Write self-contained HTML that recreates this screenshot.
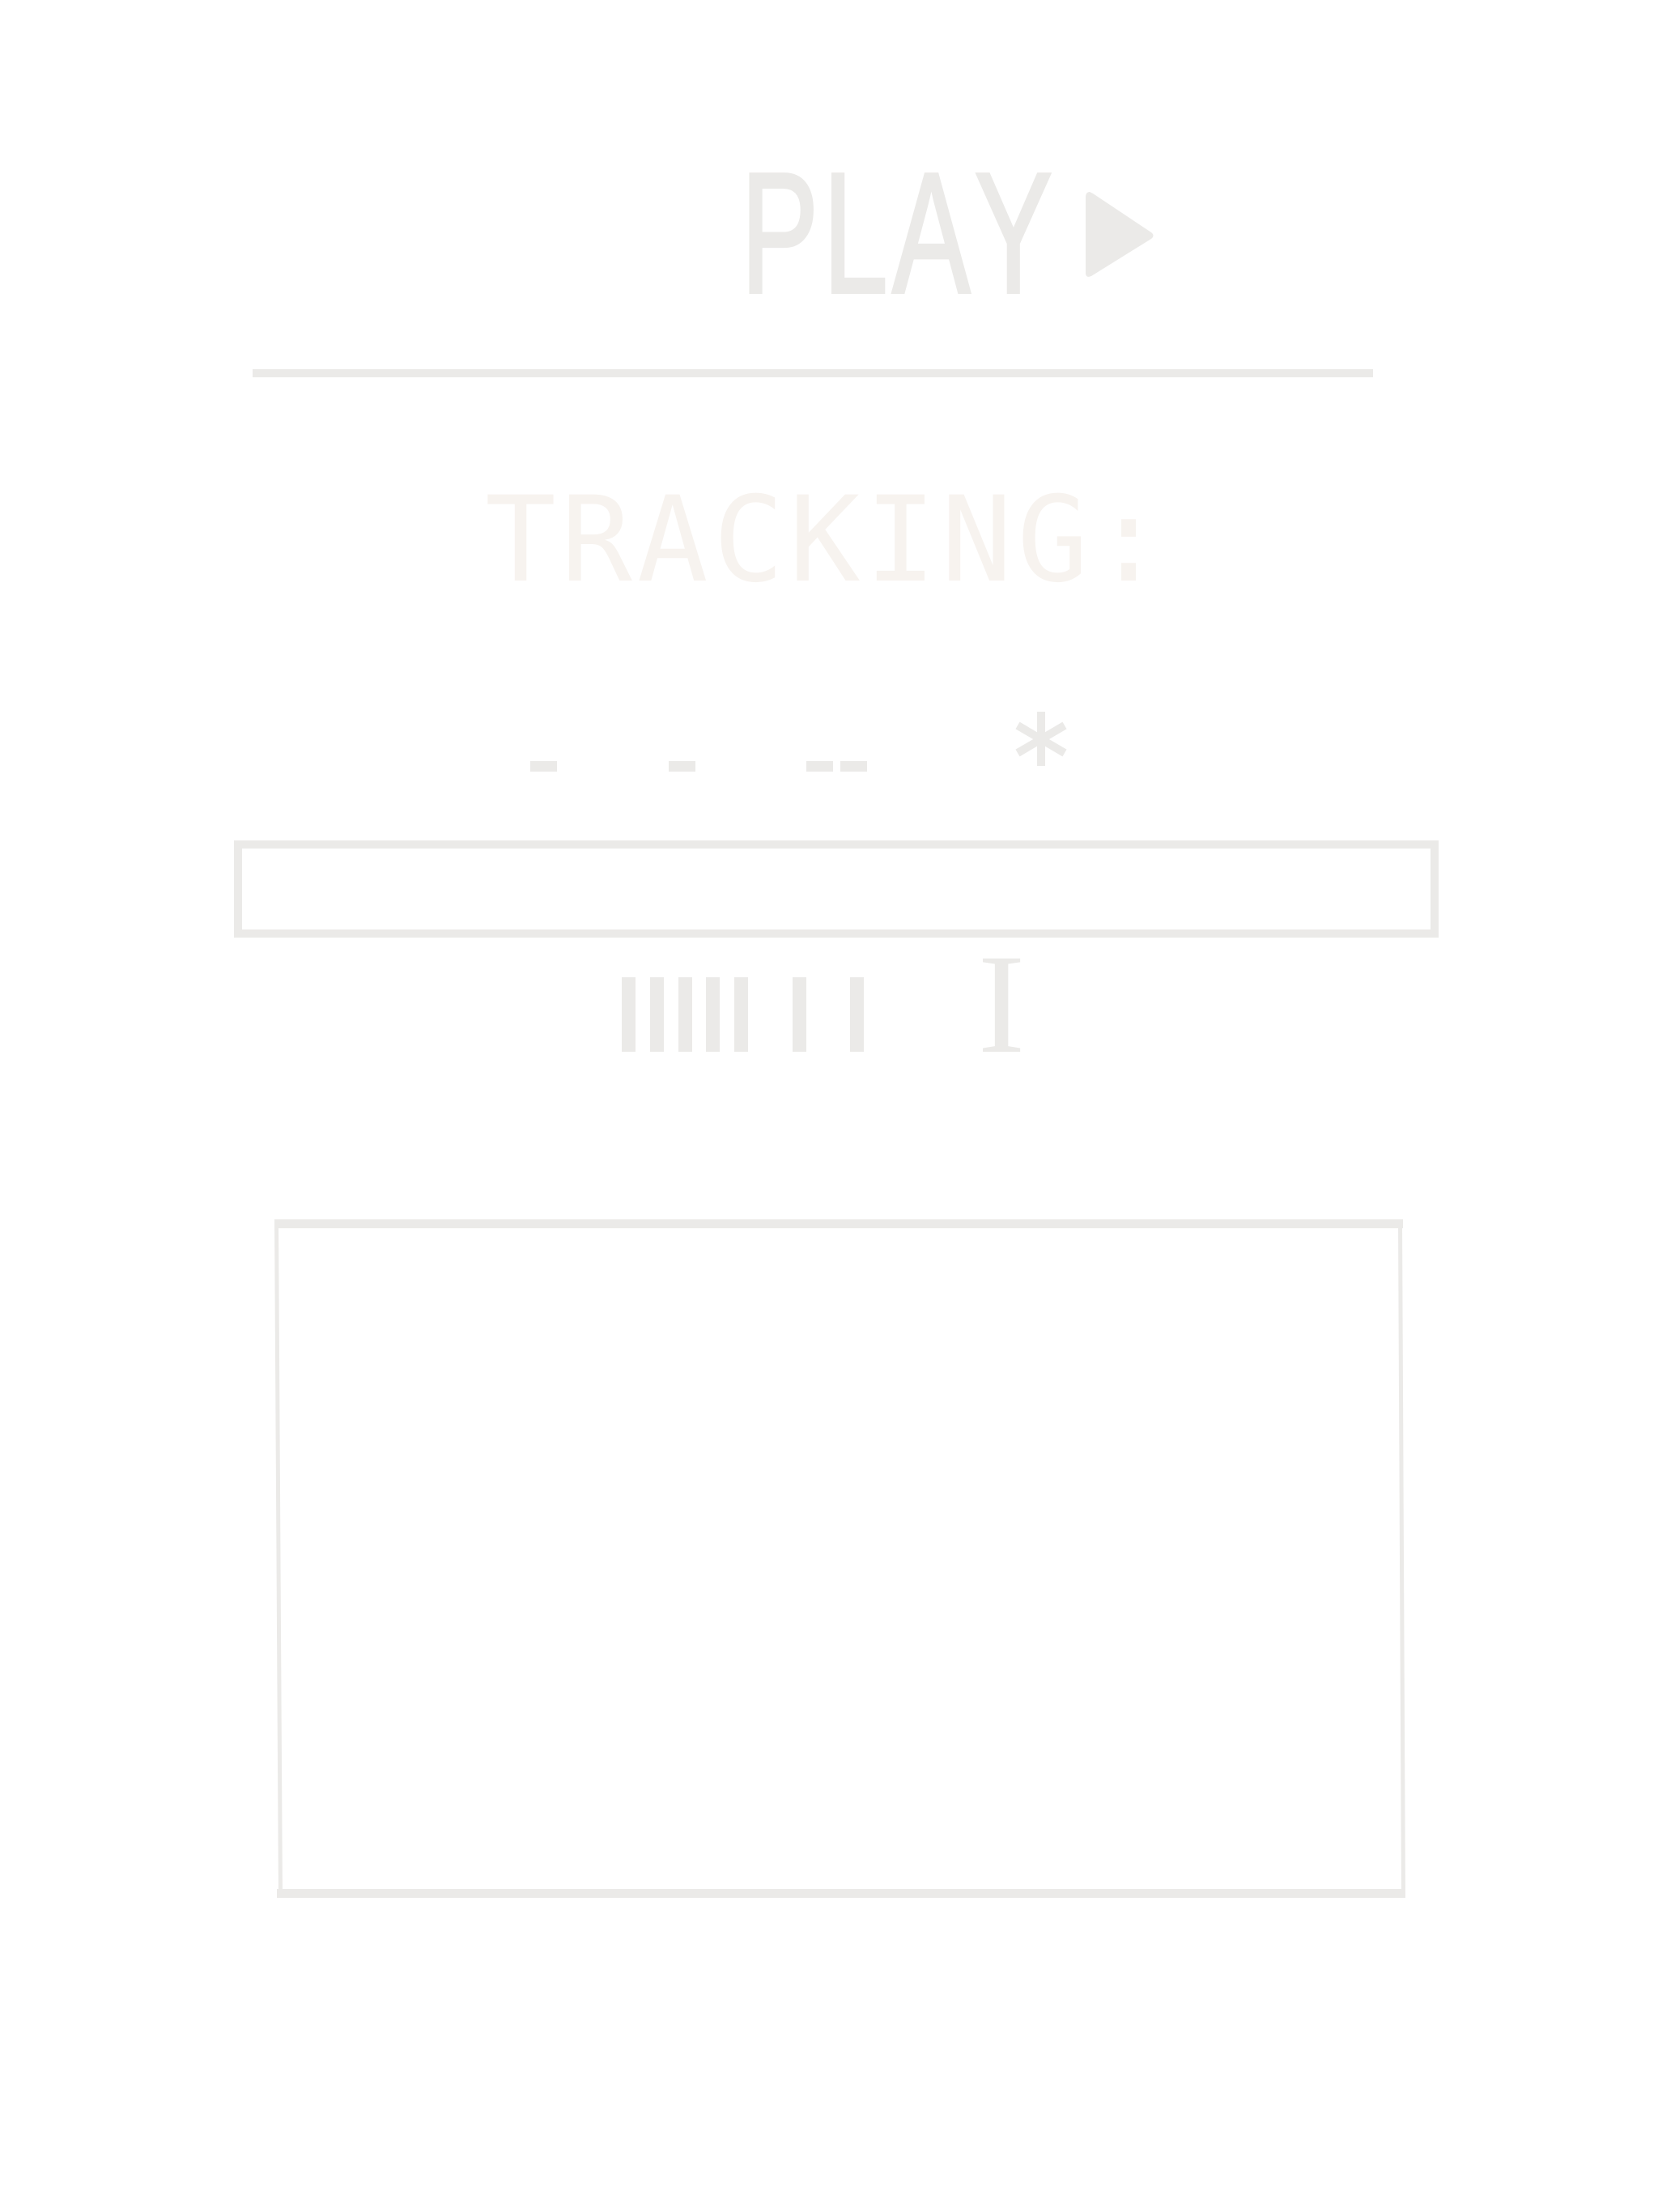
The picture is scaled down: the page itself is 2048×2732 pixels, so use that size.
<!DOCTYPE html>
<html><head><meta charset="utf-8"><style>
html,body{margin:0;padding:0;background:#fff;}
body{width:2048px;height:2732px;position:relative;overflow:hidden;}
svg{position:absolute;left:0;top:0;}
text{font-kerning:none;}
</style></head><body>
<svg width="2048" height="2732" viewBox="0 0 2048 2732">
<text x="915" y="361" font-family="Liberation Sans, sans-serif" font-size="212" letter-spacing="8" fill="#ebeae8" stroke="#ebeae8" stroke-width="4" transform="translate(915 0) scale(0.68 1) translate(-915 0)">PLAY</text>
<path d="M1346 237 Q1341 237 1341 244 L1341 337 Q1341 344 1348 341 L1422 295 Q1427 291 1422 287 L1350 239 Z" fill="#ebeae8"/>
<rect x="312" y="456" width="1384" height="10" fill="#ebeae8"/>
<text x="599" y="717" font-family="DejaVu Sans Mono, monospace" font-size="146" letter-spacing="6" fill="#f7f3ef">TRACKING:</text>
<rect x="655" y="940" width="33" height="13" fill="#ebeae8"/>
<rect x="826" y="940" width="33" height="13" fill="#ebeae8"/>
<rect x="996" y="940" width="33" height="13" fill="#ebeae8"/>
<rect x="1038" y="940" width="33" height="13" fill="#ebeae8"/>
<g stroke="#ebeae8" stroke-width="10">
<line x1="1286" y1="879" x2="1286" y2="946"/>
<line x1="1257" y1="896" x2="1315" y2="930"/>
<line x1="1257" y1="930" x2="1315" y2="896"/>
</g>
<rect x="294" y="1043" width="1478" height="110" fill="none" stroke="#ebeae8" stroke-width="10"/>
<g fill="#ebeae8">
<rect x="768" y="1207" width="17" height="92"/>
<rect x="803" y="1207" width="17" height="92"/>
<rect x="838" y="1207" width="17" height="92"/>
<rect x="872" y="1207" width="17" height="92"/>
<rect x="907" y="1207" width="17" height="92"/>
<rect x="979" y="1207" width="17" height="92"/>
<rect x="1050" y="1207" width="17" height="92"/>
</g>
<text x="1237" y="1299" text-anchor="middle" font-family="Liberation Serif, serif" font-size="176" fill="#ebeae8">I</text>
<rect x="339" y="1506" width="1394" height="11" fill="#ebeae8"/>
<rect x="342" y="2333" width="1392" height="11" fill="#ebeae8"/>
<path d="M339 1506 L344 2344 L349 2344 L344 1506 Z" fill="#ebeae8"/>
<path d="M1727 1506 L1731 2344 L1736 2344 L1732 1506 Z" fill="#ebeae8"/>
</svg>
</body></html>
